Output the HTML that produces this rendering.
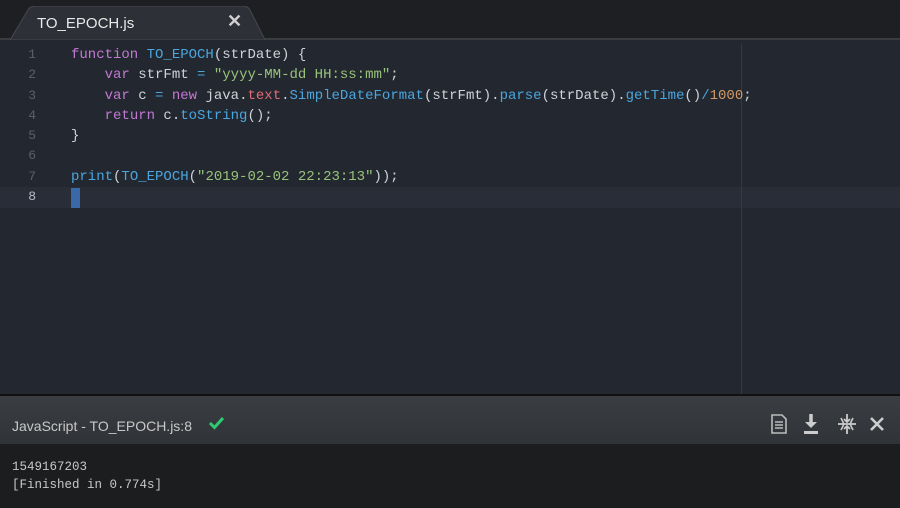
<!DOCTYPE html>
<html><head><meta charset="utf-8"><style>
*{margin:0;padding:0;box-sizing:border-box}
body{width:900px;height:508px;overflow:hidden;background:#23272f;font-family:"Liberation Mono",monospace;position:relative}
#tabbar{position:absolute;left:0;top:0;width:900px;height:40px;background:#1d1f22;border-bottom:2px solid #3a3c40}
#tab{position:absolute;left:10px;top:6px;width:255px;height:34px}
#tabtxt{position:absolute;left:37px;top:15px;font-family:"Liberation Sans",sans-serif;font-size:15px;color:#e8e8e8}
#tabx{position:absolute;left:227px;top:11px;font-family:"Liberation Sans",sans-serif;font-size:18px;color:#cfcfcf;font-weight:bold}
#editor{position:absolute;left:0;top:42px;width:900px;height:352px;background:#23272f}
.cur{position:absolute;left:0;top:145px;width:900px;height:21px;background:#282d37}
.ruler{position:absolute;left:741px;top:2px;width:1px;height:350px;background:#343943}
.ln{position:absolute;left:0;width:36px;text-align:right;font-size:13px;color:#5a606b;line-height:20.3px}
.code{position:absolute;left:71px;font-size:14px;color:#cfd3da;white-space:pre;line-height:20.3px}
.k{color:#c17ad2}.f{color:#4aa6de}.s{color:#98c37a}.r{color:#e06c75}.n{color:#d19a66}
#caret{position:absolute;left:71px;top:188px;width:9px;height:20px;background:#3a69a8}
#panel{position:absolute;left:0;top:394px;width:900px;height:114px;background:#1c1d1f;border-top:2px solid #111}
#ph{position:absolute;left:0;top:0;width:900px;height:48px;background:linear-gradient(#3a3d42,#303337)}
#pht{position:absolute;left:12px;top:22px;font-family:"Liberation Sans",sans-serif;font-size:14px;color:#c8c8c8}
#out{position:absolute;left:12px;top:62px;font-size:12.5px;color:#c8c8c8;line-height:18px;white-space:pre}
</style></head><body>
<div id="tabbar">
<svg id="tab" viewBox="0 0 255 34"><path d="M0 34 L18 4 Q20 0 26 0 L232 0 Q238 0 240 4 L255 34 Z" fill="#2d3036" stroke="#45484d"/></svg>
<div id="tabtxt">TO_EPOCH.js</div><div id="tabx">✕</div>
</div>
<div id="editor">
<div class="cur"></div>
<div class="ruler"></div>
<div class="ln" style="top:3px">1<br>2<br>3<br>4<br>5<br>6<br>7<br><span style="color:#b8bcc4">8</span></div>
<div class="code" style="top:3px"><span class="k">function</span> <span class="f">TO_EPOCH</span>(strDate) {
    <span class="k">var</span> strFmt <span class="f">=</span> <span class="s">"yyyy-MM-dd HH:ss:mm"</span>;
    <span class="k">var</span> c <span class="f">=</span> <span class="k">new</span> java.<span class="r">text</span>.<span class="f">SimpleDateFormat</span>(strFmt).<span class="f">parse</span>(strDate).<span class="f">getTime</span>()<span class="f">/</span><span class="n">1000</span>;
    <span class="k">return</span> c.<span class="f">toString</span>();
}

<span class="f">print</span>(<span class="f">TO_EPOCH</span>(<span class="s">"2019-02-02 22:23:13"</span>));
</div>
</div>
<div id="caret"></div>
<div id="panel">
<div id="ph">
<div id="pht">JavaScript - TO_EPOCH.js:8</div>
<svg style="position:absolute;left:208px;top:20px" width="17" height="14" viewBox="0 0 17 14"><path d="M2 7 L6.5 11.5 L15 2" stroke="#2ecc71" stroke-width="3" fill="none"/></svg>
<svg style="position:absolute;left:770px;top:18px" width="18" height="20" viewBox="0 0 18 20"><path d="M2 1 H12 L16 5 V19 H2 Z" fill="none" stroke="#bbb" stroke-width="1.6"/><path d="M5 8H13M5 11H13M5 14H13" stroke="#bbb" stroke-width="1.6"/></svg>
<svg style="position:absolute;left:802px;top:17px" width="18" height="22" viewBox="0 0 18 22"><path d="M9 1 V12" stroke="#ccc" stroke-width="3.5"/><path d="M3 9 L9 15 L15 9 Z" fill="#ccc"/><rect x="2" y="18" width="14" height="3" fill="#ccc"/></svg>
<svg style="position:absolute;left:836px;top:17px" width="22" height="22" viewBox="0 0 22 22"><path d="M11 1V9M8 6L11 9L14 6M11 21V13M8 16L11 13L14 16M2 11H20" stroke="#ccc" stroke-width="1.8" fill="none"/><path d="M5 5L8 11L5 17M17 5L14 11L17 17" stroke="#ccc" stroke-width="1.6" fill="none"/></svg>
<svg style="position:absolute;left:869px;top:20px" width="16" height="16" viewBox="0 0 16 16"><path d="M2 2L14 14M14 2L2 14" stroke="#ccc" stroke-width="2.6"/></svg>
</div>
<div id="out">1549167203
[Finished in 0.774s]</div>
</div>
</body></html>
